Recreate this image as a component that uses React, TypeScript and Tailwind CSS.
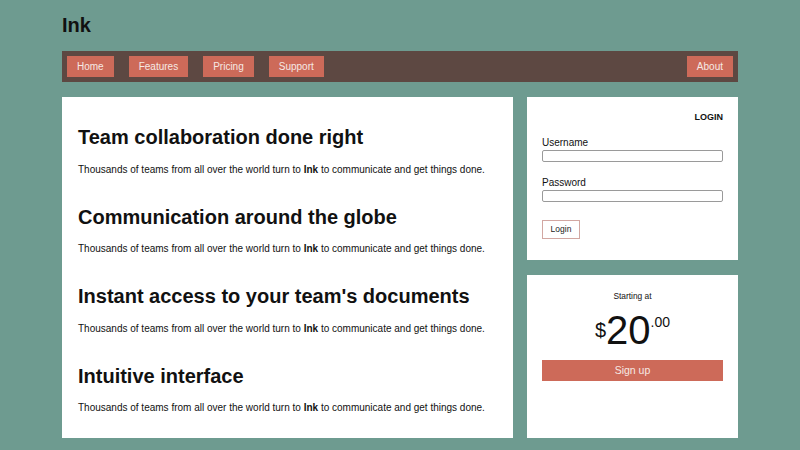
import React from "react";

const features = [
  "Team collaboration done right",
  "Communication around the globe",
  "Instant access to your team's documents",
  "Intuitive interface",
];

const navLinks = ["Home", "Features", "Pricing", "Support"];

function NavButton({ label }: { label: string }) {
  return (
    <a
      href="#"
      className="flex h-[21px] items-center bg-[#cd6a59] px-[10px] text-[10px] leading-none text-[#f6e9e4]"
    >
      {label}
    </a>
  );
}

export default function App() {
  return (
    <div
      className="h-[450px] w-full overflow-hidden bg-[#6e9b90] text-[#111]"
      style={{ fontFamily: '"Liberation Sans", Arial, sans-serif' }}
    >
      <div className="mx-auto w-[676px] pt-[14px]">
        <h1 className="text-[20px] font-bold leading-[23px]">Ink</h1>

        {/* nav */}
        <nav className="mt-[14px] flex h-[31px] items-center gap-[15px] bg-[#5d4842] px-[5px]">
          {navLinks.map((l) => (
            <NavButton key={l} label={l} />
          ))}
          <div className="ml-auto">
            <NavButton label="About" />
          </div>
        </nav>

        <div className="mt-[15px] flex gap-[14px]">
          {/* main content */}
          <main className="flex w-[451px] flex-col gap-[29px] bg-white px-4 pt-[28.4px]">
            {features.map((title) => (
              <section key={title}>
                <h2 className="text-[20px] font-bold leading-[24px]">{title}</h2>
                <p className="mt-[14.4px] text-[10px] leading-[12px]">
                  Thousands of teams from all over the world turn to{" "}
                  <b>Ink</b> to communicate and get things done.
                </p>
              </section>
            ))}
          </main>

          {/* sidebar */}
          <aside className="flex w-[211px] flex-col gap-[15px]">
            <div className="h-[163px] bg-white px-[15px] pt-[15px]">
              <h3 className="text-right text-[9px] font-bold leading-[11px]">LOGIN</h3>
              <label className="mt-[14.2px] block text-[10px] leading-[12px]">Username</label>
              <input
                type="text"
                className="mt-px block h-[12px] w-full rounded-[2px] border border-[#9a9a9a] bg-white"
              />
              <label className="mt-[14.8px] block text-[10px] leading-[12px]">Password</label>
              <input
                type="password"
                className="mt-px block h-[12px] w-full rounded-[2px] border border-[#9a9a9a] bg-white"
              />
              <button className="mt-[18px] flex h-[19px] w-[38px] items-center justify-center border border-[#d2a7a2] bg-white text-[8.5px] leading-none text-[#222]">
                Login
              </button>
            </div>

            <div className="flex h-[163px] flex-col items-center bg-white px-[15px] pt-[16.4px]">
              <p className="text-[8.4px] leading-[10px]">Starting at</p>
              <div className="mt-[8.7px] flex items-start">
                <span className="mt-[9.7px] text-[20px] leading-none">$</span>
                <span className="text-[40px] leading-[40px]">20</span>
                <span className="mt-[4.8px] text-[14px] leading-none">.00</span>
              </div>
              <button className="mt-[10px] flex h-[21px] w-full items-center justify-center bg-[#cd6a59] text-[10.5px] leading-none text-[#f6e9e4]">
                Sign up
              </button>
            </div>
          </aside>
        </div>
      </div>
    </div>
  );
}
